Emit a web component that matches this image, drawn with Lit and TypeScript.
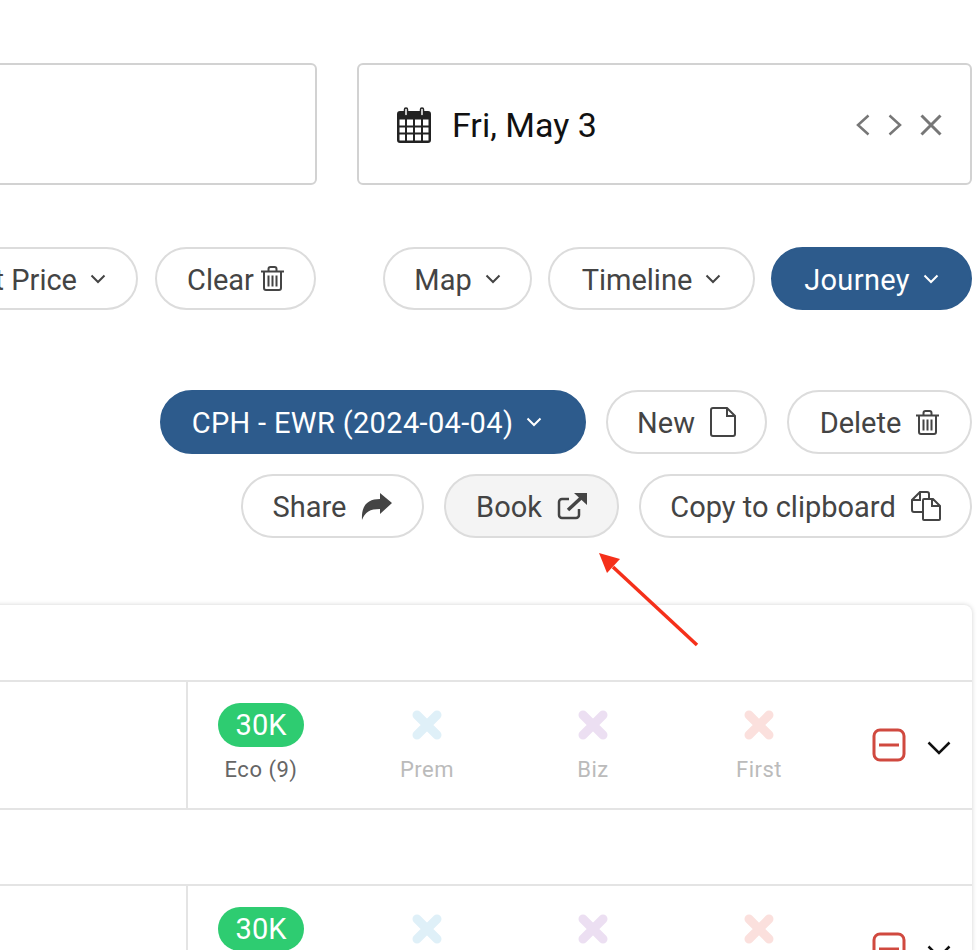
import { LitElement, html, css, svg, TemplateResult } from 'lit';
import { customElement } from 'lit/decorators.js';

const chevron = html`<svg width="16" height="10" viewBox="0 0 16 10" fill="none" stroke="currentColor" stroke-width="2"><path d="M1.500 1.500 8 8l6.500-6.500"/></svg>`;

const trash = html`<svg width="23" height="25" viewBox="0 0 23 25" fill="none" stroke="#444" stroke-width="2">
  <path d="M0 5.500h23M3 5.500v16.500a2 2 0 0 0 2 2h13a2 2 0 0 0 2-2V5.500M7.500 5.500V3a2 2 0 0 1 2-2h4a2 2 0 0 1 2 2v2.500"/>
  <path d="M7.500 9.500v11M11.500 9.500v11M15.500 9.500v11"/>
</svg>`;

const fileIcon = html`<svg width="26" height="30" viewBox="0 0 26 30" fill="none" stroke="#444" stroke-width="2">
  <path d="M3 1h14l8 8v18a2 2 0 0 1-2 2H3a2 2 0 0 1-2-2V3a2 2 0 0 1 2-2zM17 1v8h8"/>
</svg>`;

const shareIcon = html`<svg width="31" height="27" viewBox="0 0 31 27" fill="#444">
  <path d="M31 10 19 0v6C8 6 0 11 1 27c3-8 8-11 18-11v5z"/>
</svg>`;

const bookIcon = html`<svg width="30" height="27" viewBox="0 0 30 27" fill="none" stroke="#444" stroke-width="2.500">
  <path d="M22 16v6a3 3 0 0 1-3 3H5a3 3 0 0 1-3-3V9a3 3 0 0 1 3-3h7"/>
  <path stroke-width="3.500" d="M11 17 25 4"/>
  <path fill="#444" stroke="none" d="M17 0h13v12z"/>
</svg>`;

const copyIcon = html`<svg width="30" height="30" viewBox="0 0 30 30" fill="none" stroke="#444" stroke-width="2">
  <path d="M11 21H3a2 2 0 0 1-2-2V9l8-8h7a2 2 0 0 1 2 2v5M9 1v8H1"/>
  <path d="M13 8h9l7 7v13a1 1 0 0 1-1 1H13a1 1 0 0 1-1-1V9a1 1 0 0 1 1-1zM21 8v7h8"/>
</svg>`;

const calendar = svg`<svg width="34" height="36" viewBox="0 0 34 36" fill="none">
  <path fill="#222" d="M3 4h4v3h3V4h14v3h3V4h4a3 3 0 0 1 3 3v26a3 3 0 0 1-3 3H3a3 3 0 0 1-3-3V7a3 3 0 0 1 3-3z"/>
  <path fill="#fff" d="M2.500 12.500h29V33.500h-29z"/>
  <path stroke="#222" stroke-width="2" d="M2 19.500h30M2 26.500h30M9 12v22M17 12v22M25 12v22"/>
  <rect x="7.500" y="1" width="3" height="8" rx="1.500" fill="#fff" stroke="#222" stroke-width="1.500"/>
  <rect x="23.500" y="1" width="3" height="8" rx="1.500" fill="#fff" stroke="#222" stroke-width="1.500"/>
</svg>`;

const cross = (color: string) => html`<svg width="30" height="30" viewBox="0 0 30 30" fill="none" stroke=${color} stroke-width="9" stroke-linecap="round"><path d="M5 5l20 20M25 5 5 25"/></svg>`;

// the cut-off pill on the left has no fixed width, the rest match the design
const pill = (label: string, icon: TemplateResult, cls: string, width?: number) => html`
  <div class="pill ${cls}" style=${width ? `width:${width}px` : ''}><span>${label}</span>${icon}</div>
`;

const closedFares = [
  { name: 'Prem', color: '#dff0f8' },
  { name: 'Biz', color: '#ecdff2' },
  { name: 'First', color: '#fbe0dd' },
];

@customElement('app-root')
export class AppRoot extends LitElement {
  static styles = css`
    :host {
      display: block;
      position: relative;
      height: 950px;
      overflow: hidden;
      background: #fff;
      font-family: 'Roboto', 'Liberation Sans', sans-serif;
      color: #444;
    }
    svg {
      flex-shrink: 0;
    }
    .page {
      padding: 63px 6px 0 0;
    }
    .inputs {
      display: grid;
      grid-template-columns: 317px 615px;
      gap: 40px;
    }
    .box {
      height: 122px;
      box-sizing: border-box;
      border: 2px solid #d2d2d2;
      border-radius: 6px;
      background: #fff;
    }
    .box.from {
      margin-left: -20px;
    }
    .box.date {
      display: flex;
      align-items: center;
      padding: 2px 28px 0 38px;
      color: #111;
      font-size: 34px;
    }
    .date-text {
      margin-left: 21px;
      flex: 1;
    }
    .date-ctl {
      display: flex;
      align-items: center;
      color: #777;
    }
    .date-ctl svg + svg {
      margin-left: 18px;
    }
    .filters {
      display: flex;
      justify-content: space-between;
      margin-top: 62px;
    }
    .group {
      display: flex;
      gap: 16px;
    }
    .group.left {
      width: 316px;
      gap: 17px;
      justify-content: flex-end;
    }
    .toolbar {
      display: flex;
      justify-content: flex-end;
      gap: 20px;
    }
    .toolbar.first {
      margin-top: 80px;
    }
    .toolbar.second {
      margin-top: 20px;
    }
    .pill {
      display: flex;
      align-items: center;
      justify-content: center;
      flex-shrink: 0;
      height: 64px;
      box-sizing: border-box;
      padding: 0 30px;
      border: 2px solid #dcdcdc;
      border-radius: 32px;
      background: #fff;
      font-size: 29px;
      white-space: nowrap;
      gap: 13px;
    }
    .pill span {
      position: relative;
      top: 1px;
    }
    .group .pill {
      height: 63px;
    }
    .pill.on {
      background: #2d5b8c;
      border-color: #2d5b8c;
      color: #fff;
      letter-spacing: 0.35px;
    }
    .pill.soft {
      background: #f4f4f4;
    }
    .pill.icon {
      gap: 15px;
    }
    .pill.tight {
      gap: 7px;
    }
    .pill.route {
      padding: 0 12px 0 0;
    }
    .card {
      margin: 67px 0 0 -20px;
      border-radius: 8px;
      background: #fff;
      box-shadow: 0 0 5px rgba(0, 0, 0, 0.18);
    }
    .spacer {
      height: 75px;
    }
    .spacer + .row + .spacer {
      height: 74px;
    }
    .row {
      display: flex;
      height: 130px;
      box-sizing: border-box;
      border-top: 2px solid #e4e4e4;
      border-bottom: 2px solid #e4e4e4;
    }
    .lead {
      width: 208px;
      flex-shrink: 0;
      box-sizing: border-box;
      border-right: 2px solid #e4e4e4;
    }
    .fares {
      display: flex;
      gap: 80px;
      padding: 21px 0 0 30px;
    }
    .fare {
      width: 86px;
      display: flex;
      flex-direction: column;
      align-items: center;
    }
    .price {
      width: 86px;
      height: 44px;
      display: flex;
      align-items: center;
      justify-content: center;
      border-radius: 22px;
      background: #2ecc71;
      color: #fff;
      font-size: 29px;
    }
    .mark {
      height: 44px;
      display: flex;
      align-items: center;
    }
    .label {
      margin-top: 10px;
      font-size: 22px;
      letter-spacing: 0.5px;
      color: #bbb;
      white-space: nowrap;
    }
    .label.live {
      color: #666;
    }
    .actions {
      display: flex;
      align-items: center;
      gap: 21px;
      margin-left: 70px;
    }
    .actions .open {
      margin-top: 5px;
    }
    .arrow {
      position: absolute;
      left: 590px;
      top: 545px;
    }
  `;

  renderFareRow() {
    return html`
      <div class="row">
        <div class="lead"></div>
        <div class="fares">
          <div class="fare">
            <div class="price">30K</div>
            <div class="label live">Eco (9)</div>
          </div>
          ${closedFares.map(f => html`
            <div class="fare">
              <div class="mark">${cross(f.color)}</div>
              <div class="label">${f.name}</div>
            </div>
          `)}
        </div>
        <div class="actions">
          <svg width="34" height="34" viewBox="0 0 34 34" fill="none" stroke="#d0493f" stroke-width="3">
            <rect x="2" y="2" width="30" height="30" rx="6"/>
            <path d="M7 17h20"/>
          </svg>
          <svg class="open" width="24" height="14" viewBox="0 0 24 14" fill="none" stroke="#111" stroke-width="2.500"><path d="M1.500 1.500 12 12 22.500 1.500"/></svg>
        </div>
      </div>
    `;
  }

  render() {
    return html`
      <div class="page">
        <div class="inputs">
          <div class="box from"></div>
          <div class="box date">
            ${calendar}
            <span class="date-text">Fri, May 3</span>
            <div class="date-ctl">
              <svg width="14" height="22" viewBox="0 0 14 22" fill="none" stroke="currentColor" stroke-width="2.500"><path d="M12.500 1.500 2 11l10.500 9.500"/></svg>
              <svg width="14" height="22" viewBox="0 0 14 22" fill="none" stroke="currentColor" stroke-width="2.500"><path d="M1.500 1.500 12 11 1.500 20.500"/></svg>
              <svg width="22" height="22" viewBox="0 0 22 22" fill="none" stroke="currentColor" stroke-width="3"><path d="M1.500 1.500l19 19M20.500 1.500l-19 19"/></svg>
            </div>
          </div>
        </div>

        <div class="filters">
          <div class="group left">
            ${pill('Lowest Price', chevron, '')}
            ${pill('Clear', trash, 'tight', 161)}
          </div>
          <div class="group">
            ${pill('Map', chevron, '', 149)}
            ${pill('Timeline', chevron, '', 207)}
            ${pill('Journey', chevron, 'on', 201)}
          </div>
        </div>

        <div class="toolbar first">
          ${pill('CPH - EWR (2024-04-04)', chevron, 'on route', 426)}
          ${pill('New', fileIcon, 'icon', 161)}
          ${pill('Delete', trash, 'icon', 185)}
        </div>
        <div class="toolbar second">
          ${pill('Share', shareIcon, 'icon', 183)}
          ${pill('Book', bookIcon, 'icon soft', 175)}
          ${pill('Copy to clipboard', copyIcon, 'icon', 333)}
        </div>

        <div class="card">
          <div class="spacer"></div>
          ${this.renderFareRow()}
          <div class="spacer"></div>
          ${this.renderFareRow()}
        </div>
      </div>

      <svg class="arrow" width="120" height="110" viewBox="0 0 120 110" fill="none">
        <path d="M107 100 23 22" stroke="#f5301a" stroke-width="3.500"/>
        <path d="M9 8l21 6-13 14z" fill="#f5301a"/>
      </svg>
    `;
  }
}
